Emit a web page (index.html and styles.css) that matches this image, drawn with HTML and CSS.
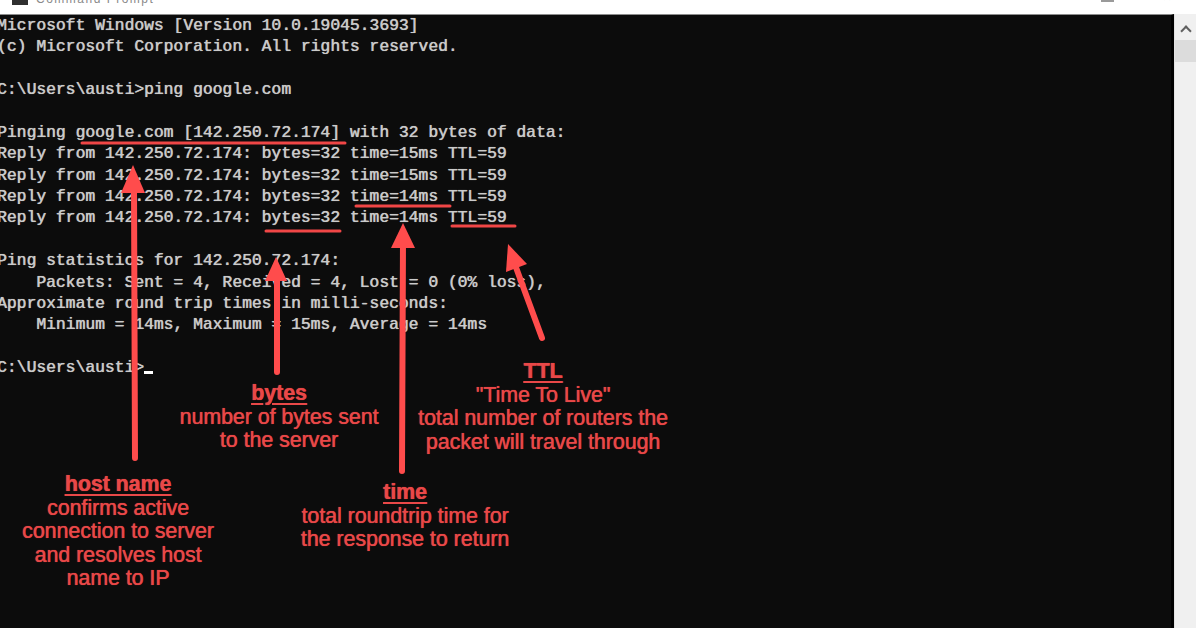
FILE: index.html
```html
<!DOCTYPE html>
<html lang="en">
<head>
<meta charset="utf-8">
<title>Command Prompt - ping</title>
<link rel="stylesheet" href="styles.css">
</head>
<body>
<div class="window">
  <div class="titlebar">
    <div class="title-left">
      <span class="app-icon"></span>
      <span class="title-text">Command Prompt</span>
    </div>
    <div class="title-controls">
      <span class="ctl-min"></span>
      <span class="ctl-close">✕</span>
    </div>
  </div>
  <div class="main">
    <div class="console">
<pre class="output">Microsoft Windows [Version 10.0.19045.3693]
(c) Microsoft Corporation. All rights reserved.

C:\Users\austi&gt;ping google.com

Pinging google.com [142.250.72.174] with 32 bytes of data:
Reply from 142.250.72.174: bytes=32 time=15ms TTL=59
Reply from 142.250.72.174: bytes=32 time=15ms TTL=59
Reply from 142.250.72.174: bytes=32 time=14ms TTL=59
Reply from 142.250.72.174: bytes=32 time=14ms TTL=59

Ping statistics for 142.250.72.174:
    Packets: Sent = 4, Received = 4, Lost = 0 (0% loss),
Approximate round trip times in milli-seconds:
    Minimum = 14ms, Maximum = 15ms, Average = 14ms

C:\Users\austi&gt;<span class="cursor"></span></pre>
    </div>
    <div class="scrollbar">
      <span class="scroll-up"></span>
      <span class="scroll-thumb"></span>
    </div>
  </div>

  <svg class="marks" width="1196" height="628" viewBox="0 0 1196 628" aria-hidden="true">
    <g class="underlines">
      <line x1="82" y1="143" x2="345" y2="143"/>
      <line x1="356" y1="206" x2="450" y2="206"/>
      <line x1="452" y1="226" x2="515" y2="226"/>
      <line x1="266" y1="231" x2="340" y2="231"/>
    </g>
    <g class="arrows">
      <line x1="134" y1="185" x2="135" y2="458"/>
      <polygon points="133,165 121,193 145,193"/>
      <line x1="277" y1="275" x2="277" y2="372"/>
      <polygon points="276,257 265,281 287,281"/>
      <line x1="403" y1="240" x2="402" y2="471"/>
      <polygon points="403,223 391,248 415,248"/>
      <line x1="514" y1="262" x2="542" y2="338"/>
      <polygon points="508,244 506,272 527,264"/>
    </g>
  </svg>

  <div class="note note-host">
    <div class="note-title">host name</div>
    <div>confirms active</div>
    <div>connection to server</div>
    <div>and resolves host</div>
    <div>name to IP</div>
  </div>
  <div class="note note-bytes">
    <div class="note-title">bytes</div>
    <div>number of bytes sent</div>
    <div>to the server</div>
  </div>
  <div class="note note-time">
    <div class="note-title">time</div>
    <div>total roundtrip time for</div>
    <div>the response to return</div>
  </div>
  <div class="note note-ttl">
    <div class="note-title">TTL</div>
    <div>"Time To Live"</div>
    <div>total number of routers the</div>
    <div>packet will travel through</div>
  </div>
</div>
</body>
</html>
```

FILE: styles.css
```css
html, body {
  margin: 0;
  padding: 0;
  background: #0c0c0c;
  overflow: hidden;
}

.window {
  position: relative;
  width: 1196px;
  height: 628px;
  display: flex;
  flex-direction: column;
  background: #ffffff;
  overflow: hidden;
}

.titlebar {
  height: 14px;
  flex: 0 0 14px;
  background: #ffffff;
  display: flex;
  justify-content: space-between;
  align-items: flex-start;
  overflow: hidden;
  font-family: "Liberation Sans", Arial, sans-serif;
  font-size: 12px;
  color: #7a7a7a;
}

.title-left {
  display: flex;
  align-items: flex-end;
  gap: 8px;
  padding-left: 12px;
  margin-top: -10px;
  height: 15px;
}

.app-icon {
  width: 16px;
  height: 12px;
  background: #303030;
  display: inline-block;
}

.title-text {
  letter-spacing: 1.5px;
  color: #8a8a8a;
  line-height: 12px;
}

.title-controls {
  display: flex;
  gap: 48px;
  padding-right: 24px;
  margin-top: -8px;
}

.ctl-min {
  width: 13px;
  height: 8px;
  border-bottom: 2px solid #9a9a9a;
  display: inline-block;
}

.ctl-close {
  color: #b0b0b0;
  font-size: 12px;
  line-height: 11px;
}

.main {
  flex: 1;
  display: flex;
  min-height: 0;
}

.console {
  flex: 1;
  background: #0c0c0c;
  border-top: 1px solid #8c8c8c;
  border-right: 3px solid #000000;
  overflow: hidden;
}

.output {
  margin: 0 0 0 -3px;
  padding: 0;
  font-family: "Liberation Mono", "DejaVu Sans Mono", monospace;
  font-size: 16.33px;
  line-height: 21.38px;
  color: #cbcbcb;
  text-shadow: 0.5px 0 0 rgba(205, 205, 205, 0.8), 0 0 1px rgba(220, 220, 220, 0.5);
  white-space: pre;
}

.cursor {
  display: inline-block;
  width: 9px;
  height: 3px;
  background: #ffffff;
  vertical-align: -2px;
}

.scrollbar {
  width: 21px;
  flex: 0 0 21px;
  background: #f0f0f0;
  border-left: 1px solid #e2e2e2;
  display: flex;
  flex-direction: column;
  align-items: center;
}

.scroll-up {
  width: 6px;
  height: 6px;
  border-left: 2px solid #606060;
  border-top: 2px solid #606060;
  transform: rotate(45deg);
  margin-top: 13px;
}

.scroll-thumb {
  width: 100%;
  height: 22px;
  margin-top: 5px;
  background: #dcdcdc;
}

.marks {
  position: absolute;
  left: 0;
  top: 0;
  pointer-events: none;
}

.underlines line {
  stroke: #f04646;
  stroke-width: 3;
  stroke-linecap: round;
}

.arrows line {
  stroke: #ff4c4c;
  stroke-width: 6;
  stroke-linecap: round;
}

.arrows polygon {
  fill: #ff4c4c;
}

.note {
  position: absolute;
  transform: translateX(-50%);
  text-align: center;
  white-space: nowrap;
  font-family: "Liberation Sans", Arial, sans-serif;
  font-size: 21.3px;
  line-height: 23.5px;
  color: #e94848;
  text-shadow: 0.4px 0 0 rgba(233, 72, 72, 0.8), 0 0 1px rgba(255, 80, 80, 0.6);
}

.note-title {
  font-weight: bold;
  text-decoration: underline;
  text-decoration-thickness: 2px;
  text-underline-offset: 3px;
}

.note-host {
  left: 118px;
  top: 473px;
}

.note-bytes {
  left: 279px;
  top: 382px;
}

.note-time {
  left: 405px;
  top: 481px;
}

.note-ttl {
  left: 543px;
  top: 360px;
}
```
